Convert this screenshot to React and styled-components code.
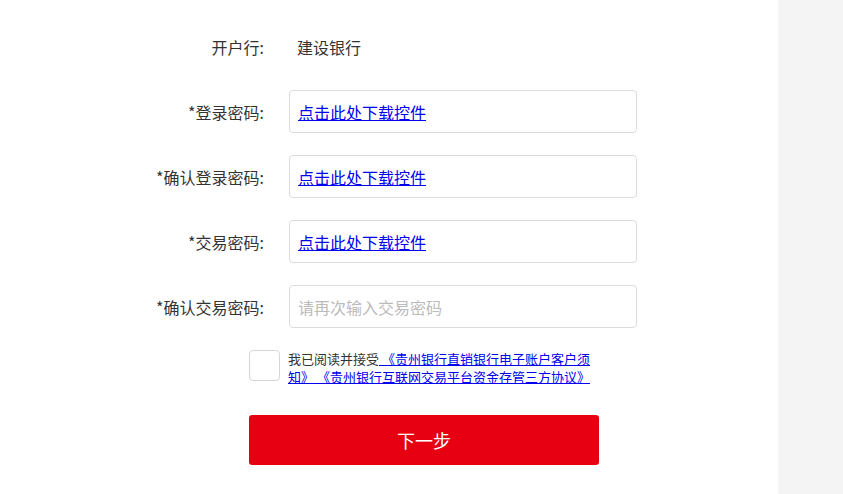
import React from "react";
import styled, { createGlobalStyle } from "styled-components";

const Global = createGlobalStyle`
  html, body { margin: 0; padding: 0; }
  body { font-family: "Noto Sans CJK SC", "Liberation Sans", sans-serif; color: #333; }
  * { box-sizing: border-box; }
`;

const Page = styled.div`
  display: flex;
  height: 494px;
  overflow: hidden;
`;

const Main = styled.div`
  flex: 1;
  background: #fff;
  padding-top: 25px;
`;

const Side = styled.div`
  width: 65px;
  background: #f4f4f4;
`;

const Row = styled.div`
  display: grid;
  grid-template-columns: 264px 348px;
  column-gap: 25px;
  align-items: center;
  height: 43px;
  margin-bottom: 22px;
`;

const Label = styled.div`
  text-align: right;
  font-size: 16px;
  color: #333;
  white-space: nowrap;
`;

const Value = styled.div`
  padding-left: 8px;
  font-size: 16px;
  color: #333;
`;

const Field = styled.div`
  height: 43px;
  border: 1px solid #dcdcdc;
  border-radius: 4px;
  display: flex;
  align-items: center;
  padding-left: 8px;
  font-size: 16px;
`;

const DownloadLink = styled.a`
  color: #0000ee;
  text-decoration: underline;
  cursor: pointer;
`;

const Input = styled.input`
  width: 100%;
  height: 100%;
  border: none;
  outline: none;
  font: inherit;
  font-size: 16px;
  padding: 0;
  background: transparent;
  &::placeholder { color: #bbb; }
`;

const Agree = styled.div`
  display: flex;
  align-items: flex-start;
  gap: 8px;
  margin-left: 249px;
`;

const Check = styled.div`
  width: 31px;
  height: 31px;
  border: 1px solid #d6d6d6;
  border-radius: 4px;
  flex: none;
`;

const AgreeText = styled.div`
  width: 310px;
  font-size: 13px;
  line-height: 18px;
  color: #333;
`;

const DocLink = styled.a`
  color: #0000ee;
  text-decoration: underline;
  white-space: pre-wrap;
`;

const Submit = styled.button`
  display: block;
  margin: 29px 0 0 249px;
  width: 350px;
  height: 50px;
  border: none;
  border-radius: 3px;
  background: #e60012;
  color: #fff;
  font-family: inherit;
  font-size: 18px;
  cursor: pointer;
`;

const rows = [
  { label: "*登录密码:", link: true },
  { label: "*确认登录密码:", link: true },
  { label: "*交易密码:", link: true },
  { label: "*确认交易密码:", placeholder: "请再次输入交易密码" },
];

export default function App() {
  return (
    <>
      <Global />
      <Page>
        <Main>
          <Row>
            <Label>开户行:</Label>
            <Value>建设银行</Value>
          </Row>
          {rows.map((r) => (
            <Row key={r.label}>
              <Label>{r.label}</Label>
              <Field>
                {r.link ? (
                  <DownloadLink>点击此处下载控件</DownloadLink>
                ) : (
                  <Input type="password" placeholder={r.placeholder} />
                )}
              </Field>
            </Row>
          ))}
          <Agree>
            <Check />
            <AgreeText>
              我已阅读并接受<DocLink> 《贵州银行直销银行电子账户客户须知》</DocLink>
              <DocLink> 《贵州银行互联网交易平台资金存管三方协议》</DocLink>
            </AgreeText>
          </Agree>
          <Submit>下一步</Submit>
        </Main>
        <Side />
      </Page>
    </>
  );
}
